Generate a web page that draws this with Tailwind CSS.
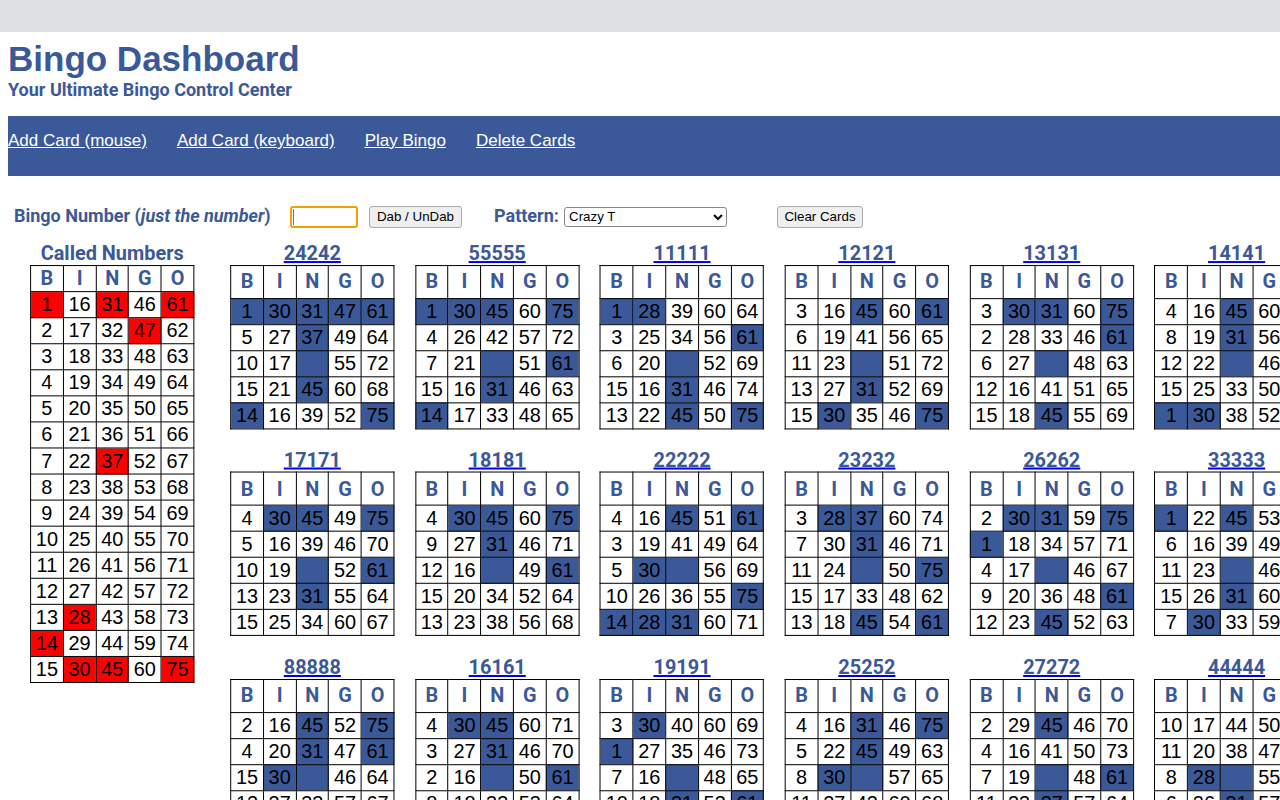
<!DOCTYPE html>
<html lang="en">
<head>
<meta charset="utf-8">
<title>Bingo Dashboard</title>
<script src="https://cdn.jsdelivr.net/npm/@tailwindcss/browser@4"></script>
</head>
<body class="w-[1280px] h-[800px] overflow-hidden bg-white font-['Liberation_Sans',sans-serif]">
<div class="h-8 bg-[#dee0e2]"></div>
<div class="w-[1500px] pl-2">
<header class="font-bold text-[#3b5998]">
<h1 class="pt-[6px] text-[35px] leading-[42px]">Bingo Dashboard</h1>
<h2 class="font-['Roboto',sans-serif] text-[18px] leading-[21px] -mt-[1px]">Your Ultimate Bingo Control Center</h2>
</header>
<nav class="mt-[16px] h-[60px] bg-[#3b5998] flex gap-[30px] pt-[14px] text-[17px] leading-[21px] text-white underline items-start">
<a href="#">Add Card (mouse)</a><a href="#">Add Card (keyboard)</a><a href="#">Play Bingo</a><a href="#">Delete Cards</a>
</nav>
<form class="mt-[29px] h-[23px] flex items-center pl-[6px] font-['Roboto',sans-serif] font-bold text-[18px] text-[#3b5998]">
<label class="w-[276px] whitespace-nowrap pb-[2px]">Bingo Number (<em>just the number</em>)</label>
<span class="w-[68px] h-[22px] border-2 border-[#f5a000] rounded-[3px] flex items-center pl-[1px]"><span class="w-px h-[16px] bg-[#777]"></span></span>
<button type="button" class="ml-[11px] w-[93px] h-[22px] bg-[#efefef] border border-[#aaa] rounded-[3px] font-['Liberation_Sans',sans-serif] font-normal text-[13.33px] text-black">Dab / UnDab</button>
<label class="ml-[32px] w-[70px] pb-[2px]">Pattern:</label>
<select class="w-[163px] h-[20px] bg-white border border-[#888] rounded-[3px] font-['Liberation_Sans',sans-serif] font-normal text-[13.33px] text-black"><option>Crazy T</option></select>
<button type="button" class="ml-[50px] w-[86px] h-[22px] bg-[#efefef] border border-[#aaa] rounded-[3px] font-['Liberation_Sans',sans-serif] font-normal text-[13.33px] text-black">Clear Cards</button>
</form>
<main class="mt-[13px] flex items-start origin-top-left scale-x-[0.9955] scale-y-[1.0023] -translate-x-[0.8px] translate-y-[0px]">
<section class="ml-[23px] w-[165px] shrink-0 text-center">
<h3 class="font-['Roboto',sans-serif] font-bold text-[20px] leading-[24px] text-[#3b5998]">Called Numbers</h3>
<table class="w-[165px] table-fixed border-collapse text-[20px] leading-[25px] text-center [&_td]:border [&_td]:border-black [&_td]:p-0 [&_th]:border [&_th]:border-black [&_th]:p-0 [&_th]:font-['Roboto',sans-serif] [&_th]:text-[#3b5998]">
<tr><th>B<th>I<th>N<th>G<th>O</tr>
<tr><td class="bg-[#ff0000]">1<td>16<td class="bg-[#ff0000]">31<td>46<td class="bg-[#ff0000]">61</tr>
<tr><td>2<td>17<td>32<td class="bg-[#ff0000]">47<td>62</tr>
<tr><td>3<td>18<td>33<td>48<td>63</tr>
<tr><td>4<td>19<td>34<td>49<td>64</tr>
<tr><td>5<td>20<td>35<td>50<td>65</tr>
<tr><td>6<td>21<td>36<td>51<td>66</tr>
<tr><td>7<td>22<td class="bg-[#ff0000]">37<td>52<td>67</tr>
<tr><td>8<td>23<td>38<td>53<td>68</tr>
<tr><td>9<td>24<td>39<td>54<td>69</tr>
<tr><td>10<td>25<td>40<td>55<td>70</tr>
<tr><td>11<td>26<td>41<td>56<td>71</tr>
<tr><td>12<td>27<td>42<td>57<td>72</tr>
<tr><td>13<td class="bg-[#ff0000]">28<td>43<td>58<td>73</tr>
<tr><td class="bg-[#ff0000]">14<td>29<td>44<td>59<td>74</tr>
<tr><td>15<td class="bg-[#ff0000]">30<td class="bg-[#ff0000]">45<td>60<td class="bg-[#ff0000]">75</tr>
</table>
</section>
<section class="ml-[36px] -mt-[0.1px] grid grid-cols-[repeat(6,165px)] gap-x-[20.7px] gap-y-[0.5px] text-center
 [&_h3]:font-['Roboto',sans-serif] [&_h3]:font-bold [&_h3]:text-[20px] [&_h3]:leading-[24px] [&_h3]:text-[#3b5998] [&_h3]:underline [&_h3]:decoration-[#0000ee]
 [&_table]:w-[165px] [&_table]:table-fixed [&_table]:border-collapse [&_table]:text-[20px] [&_table]:leading-[25px] [&_table]:mb-[18px]
 [&_td]:border [&_td]:border-black [&_td]:p-0 [&_td]:h-[26px]
 [&_th]:border [&_th]:border-black [&_th]:p-0 [&_th]:h-[33px] [&_th]:font-['Roboto',sans-serif] [&_th]:text-[#3b5998]
 [&_.m]:bg-[#3b5998]">
<div><h3>24242</h3><table><tr><th>B<th>I<th>N<th>G<th>O</tr>
<tr><td class="m">1<td class="m">30<td class="m">31<td class="m">47<td class="m">61</tr>
<tr><td>5<td>27<td class="m">37<td>49<td>64</tr>
<tr><td>10<td>17<td class="m"><td>55<td>72</tr>
<tr><td>15<td>21<td class="m">45<td>60<td>68</tr>
<tr><td class="m">14<td>16<td>39<td>52<td class="m">75</tr></table></div>
<div><h3>55555</h3><table><tr><th>B<th>I<th>N<th>G<th>O</tr>
<tr><td class="m">1<td class="m">30<td class="m">45<td>60<td class="m">75</tr>
<tr><td>4<td>26<td>42<td>57<td>72</tr>
<tr><td>7<td>21<td class="m"><td>51<td class="m">61</tr>
<tr><td>15<td>16<td class="m">31<td>46<td>63</tr>
<tr><td class="m">14<td>17<td>33<td>48<td>65</tr></table></div>
<div><h3>11111</h3><table><tr><th>B<th>I<th>N<th>G<th>O</tr>
<tr><td class="m">1<td class="m">28<td>39<td>60<td>64</tr>
<tr><td>3<td>25<td>34<td>56<td class="m">61</tr>
<tr><td>6<td>20<td class="m"><td>52<td>69</tr>
<tr><td>15<td>16<td class="m">31<td>46<td>74</tr>
<tr><td>13<td>22<td class="m">45<td>50<td class="m">75</tr></table></div>
<div><h3>12121</h3><table><tr><th>B<th>I<th>N<th>G<th>O</tr>
<tr><td>3<td>16<td class="m">45<td>60<td class="m">61</tr>
<tr><td>6<td>19<td>41<td>56<td>65</tr>
<tr><td>11<td>23<td class="m"><td>51<td>72</tr>
<tr><td>13<td>27<td class="m">31<td>52<td>69</tr>
<tr><td>15<td class="m">30<td>35<td>46<td class="m">75</tr></table></div>
<div><h3>13131</h3><table><tr><th>B<th>I<th>N<th>G<th>O</tr>
<tr><td>3<td class="m">30<td class="m">31<td>60<td class="m">75</tr>
<tr><td>2<td>28<td>33<td>46<td class="m">61</tr>
<tr><td>6<td>27<td class="m"><td>48<td>63</tr>
<tr><td>12<td>16<td>41<td>51<td>65</tr>
<tr><td>15<td>18<td class="m">45<td>55<td>69</tr></table></div>
<div><h3>14141</h3><table><tr><th>B<th>I<th>N<th>G<th>O</tr>
<tr><td>4<td>16<td class="m">45<td>60<td>70</tr>
<tr><td>8<td>19<td class="m">31<td>56<td>66</tr>
<tr><td>12<td>22<td class="m"><td>46<td>71</tr>
<tr><td>15<td>25<td>33<td>50<td>64</tr>
<tr><td class="m">1<td class="m">30<td>38<td>52<td>69</tr></table></div>
<div><h3>17171</h3><table><tr><th>B<th>I<th>N<th>G<th>O</tr>
<tr><td>4<td class="m">30<td class="m">45<td>49<td class="m">75</tr>
<tr><td>5<td>16<td>39<td>46<td>70</tr>
<tr><td>10<td>19<td class="m"><td>52<td class="m">61</tr>
<tr><td>13<td>23<td class="m">31<td>55<td>64</tr>
<tr><td>15<td>25<td>34<td>60<td>67</tr></table></div>
<div><h3>18181</h3><table><tr><th>B<th>I<th>N<th>G<th>O</tr>
<tr><td>4<td class="m">30<td class="m">45<td>60<td class="m">75</tr>
<tr><td>9<td>27<td class="m">31<td>46<td>71</tr>
<tr><td>12<td>16<td class="m"><td>49<td class="m">61</tr>
<tr><td>15<td>20<td>34<td>52<td>64</tr>
<tr><td>13<td>23<td>38<td>56<td>68</tr></table></div>
<div><h3>22222</h3><table><tr><th>B<th>I<th>N<th>G<th>O</tr>
<tr><td>4<td>16<td class="m">45<td>51<td class="m">61</tr>
<tr><td>3<td>19<td>41<td>49<td>64</tr>
<tr><td>5<td class="m">30<td class="m"><td>56<td>69</tr>
<tr><td>10<td>26<td>36<td>55<td class="m">75</tr>
<tr><td class="m">14<td class="m">28<td class="m">31<td>60<td>71</tr></table></div>
<div><h3>23232</h3><table><tr><th>B<th>I<th>N<th>G<th>O</tr>
<tr><td>3<td class="m">28<td class="m">37<td>60<td>74</tr>
<tr><td>7<td>30<td class="m">31<td>46<td>71</tr>
<tr><td>11<td>24<td class="m"><td>50<td class="m">75</tr>
<tr><td>15<td>17<td>33<td>48<td>62</tr>
<tr><td>13<td>18<td class="m">45<td>54<td class="m">61</tr></table></div>
<div><h3>26262</h3><table><tr><th>B<th>I<th>N<th>G<th>O</tr>
<tr><td>2<td class="m">30<td class="m">31<td>59<td class="m">75</tr>
<tr><td class="m">1<td>18<td>34<td>57<td>71</tr>
<tr><td>4<td>17<td class="m"><td>46<td>67</tr>
<tr><td>9<td>20<td>36<td>48<td class="m">61</tr>
<tr><td>12<td>23<td class="m">45<td>52<td>63</tr></table></div>
<div><h3>33333</h3><table><tr><th>B<th>I<th>N<th>G<th>O</tr>
<tr><td class="m">1<td>22<td class="m">45<td>53<td>70</tr>
<tr><td>6<td>16<td>39<td>49<td>66</tr>
<tr><td>11<td>23<td class="m"><td>46<td>71</tr>
<tr><td>15<td>26<td class="m">31<td>60<td>64</tr>
<tr><td>7<td class="m">30<td>33<td>59<td>69</tr></table></div>
<div><h3>88888</h3><table><tr><th>B<th>I<th>N<th>G<th>O</tr>
<tr><td>2<td>16<td class="m">45<td>52<td class="m">75</tr>
<tr><td>4<td>20<td class="m">31<td>47<td class="m">61</tr>
<tr><td>15<td class="m">30<td class="m"><td>46<td>64</tr>
<tr><td>12<td>27<td>33<td>57<td>67</tr></table></div>
<div><h3>16161</h3><table><tr><th>B<th>I<th>N<th>G<th>O</tr>
<tr><td>4<td class="m">30<td class="m">45<td>60<td>71</tr>
<tr><td>3<td>27<td class="m">31<td>46<td>70</tr>
<tr><td>2<td>16<td class="m"><td>50<td class="m">61</tr>
<tr><td>8<td>18<td>33<td>53<td>64</tr></table></div>
<div><h3>19191</h3><table><tr><th>B<th>I<th>N<th>G<th>O</tr>
<tr><td>3<td class="m">30<td>40<td>60<td>69</tr>
<tr><td class="m">1<td>27<td>35<td>46<td>73</tr>
<tr><td>7<td>16<td class="m"><td>48<td>65</tr>
<tr><td>10<td>18<td class="m">31<td>53<td class="m">61</tr></table></div>
<div><h3>25252</h3><table><tr><th>B<th>I<th>N<th>G<th>O</tr>
<tr><td>4<td>16<td class="m">31<td>46<td class="m">75</tr>
<tr><td>5<td>22<td class="m">45<td>49<td>63</tr>
<tr><td>8<td class="m">30<td class="m"><td>57<td>65</tr>
<tr><td>11<td>27<td>42<td>60<td>68</tr></table></div>
<div><h3>27272</h3><table><tr><th>B<th>I<th>N<th>G<th>O</tr>
<tr><td>2<td>29<td class="m">45<td>46<td>70</tr>
<tr><td>4<td>16<td>41<td>50<td>73</tr>
<tr><td>7<td>19<td class="m"><td>48<td class="m">61</tr>
<tr><td>11<td>23<td class="m">37<td>57<td>64</tr></table></div>
<div><h3>44444</h3><table><tr><th>B<th>I<th>N<th>G<th>O</tr>
<tr><td>10<td>17<td>44<td>50<td>66</tr>
<tr><td>11<td>20<td>38<td>47<td>71</tr>
<tr><td>8<td class="m">28<td class="m"><td>55<td>62</tr>
<tr><td>6<td>26<td class="m">31<td>57<td>68</tr></table></div>
</section>
</main>
</div>
</body>
</html>
